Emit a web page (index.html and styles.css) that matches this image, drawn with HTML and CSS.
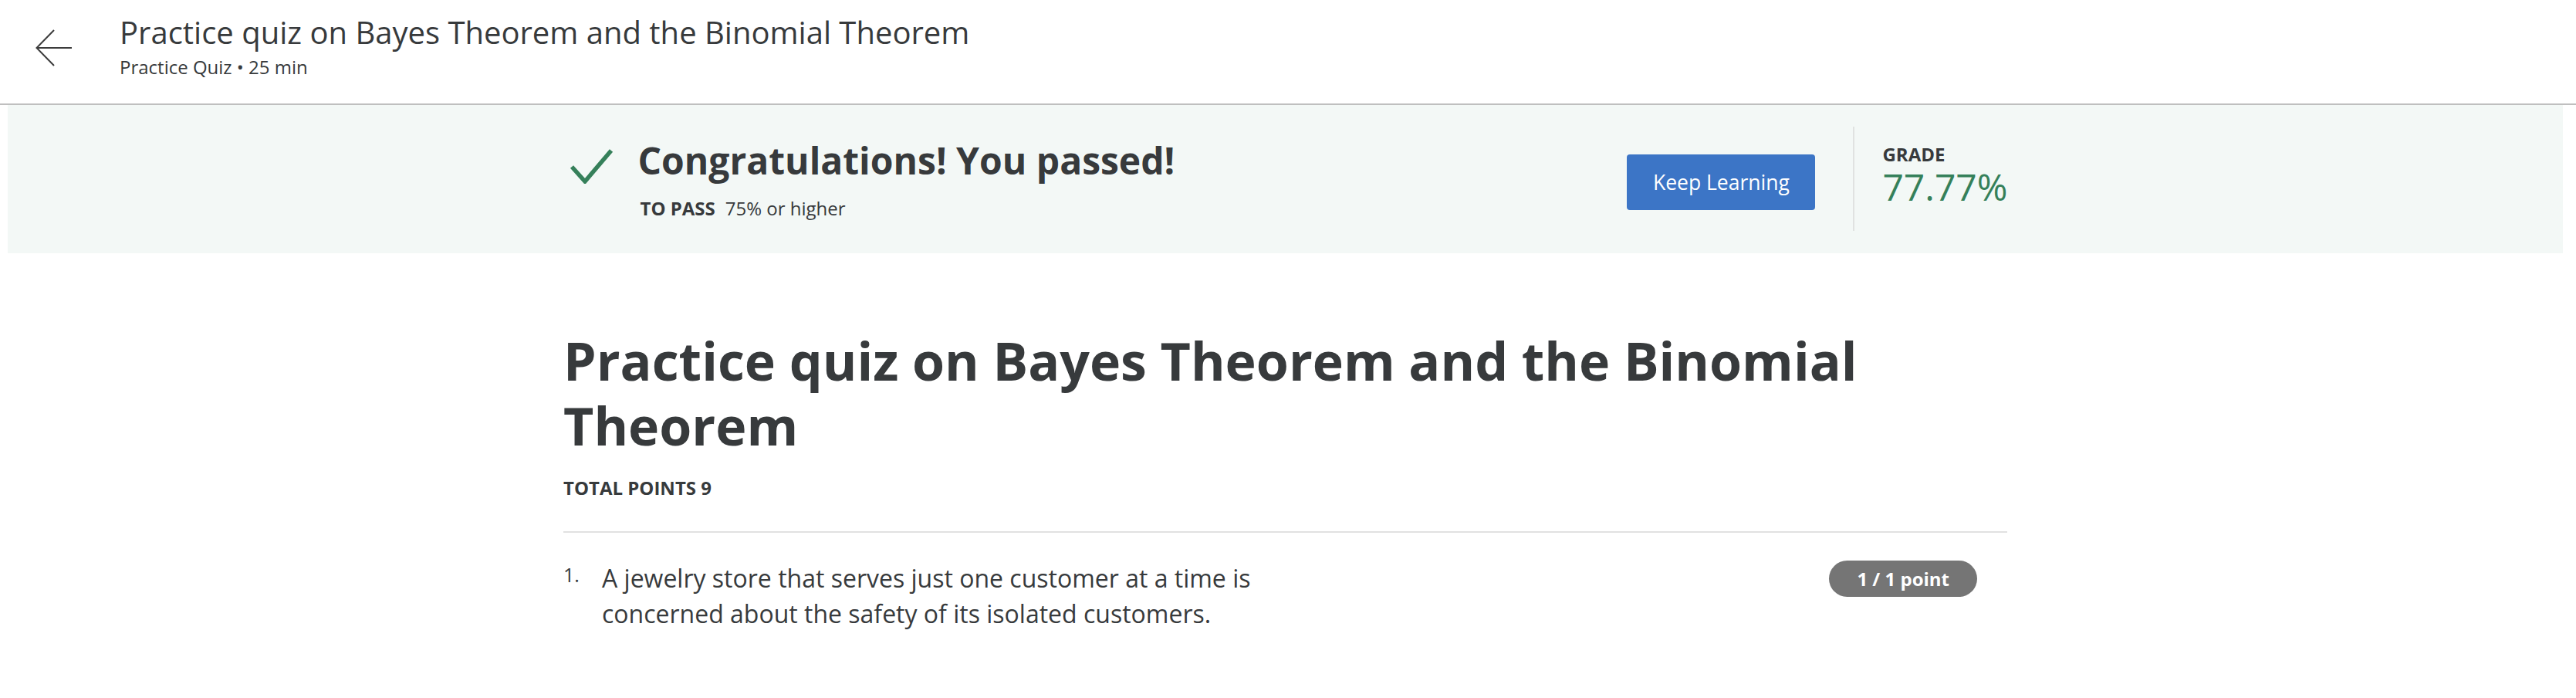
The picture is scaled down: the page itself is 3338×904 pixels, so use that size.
FILE: index.html
```html
<!DOCTYPE html>
<html lang="en">
<head>
<meta charset="utf-8">
<title>Practice quiz on Bayes Theorem and the Binomial Theorem</title>
<link rel="stylesheet" href="styles.css">
</head>
<body>
<header class="topbar">
  <a class="back" href="#" aria-label="Back">
    <svg width="48" height="48" viewBox="0 0 48 48"><path d="M47 24H1.5M24 1L1.5 24L24 47" fill="none" stroke="#3c3c3c" stroke-width="2"/></svg>
  </a>
  <div class="topbar-text">
    <div class="topbar-title">Practice quiz on Bayes Theorem and the Binomial Theorem</div>
    <div class="topbar-sub">Practice Quiz • 25 min</div>
  </div>
</header>

<section class="banner">
  <div class="wrap banner-row">
    <div class="pass">
      <svg class="check" width="64" height="60" viewBox="0 0 64 60"><polyline points="10,38 27,57 61,17" fill="none" stroke="#35805a" stroke-width="5.5"/></svg>
      <div class="pass-text">
        <h2 class="pass-title">Congratulations! You passed!</h2>
        <div class="pass-req"><span class="label">TO PASS</span>75% or higher</div>
      </div>
    </div>
    <div class="result">
      <button class="btn">Keep Learning</button>
      <div class="vdiv"></div>
      <div class="grade">
        <div class="grade-label">GRADE</div>
        <div class="grade-value">77.77%</div>
      </div>
    </div>
  </div>
</section>

<main class="wrap content">
  <h1 class="quiz-title">Practice quiz on Bayes Theorem and the Binomial Theorem</h1>
  <div class="total">TOTAL POINTS 9</div>
  <div class="question">
    <div class="q-main">
      <span class="q-num">1.</span>
      <p class="q-text">A jewelry store that serves just one customer at a time is concerned about the safety of its isolated customers.</p>
    </div>
    <span class="badge">1 / 1 point</span>
  </div>
</main>
</body>
</html>
```

FILE: styles.css
```css
* { box-sizing: border-box; }
html, body { margin: 0; padding: 0; background: #fff; }
body {
  font-family: "Open Sans", "Liberation Sans", sans-serif;
  color: #373a3c;
}

.topbar {
  display: flex;
  align-items: flex-start;
  height: 136px;
  padding: 18px 0 0 46px;
  border-bottom: 2px solid #bfbfbf;
}
.back { display: block; margin-top: 20px; width: 48px; height: 48px; }
.back svg { display: block; }
.topbar-text { margin-left: 61px; }
.topbar-title { font-size: 40px; line-height: 48px; color: #373a3c; }
.topbar-sub { font-size: 24px; line-height: 32px; margin-top: 5px; color: #373a3c; }

.wrap { width: 1871px; margin-left: calc(50% - 939px); }

.banner {
  background: #f3f8f6;
  margin: 0 17px 0 10px;
  padding: 28px 0 29px;
}
.banner-row { display: flex; justify-content: space-between; align-items: flex-start; margin-left: calc(50% - 935px); }
.pass { display: flex; align-items: flex-start; margin-top: 14px; }
.check { display: block; margin-right: 32px; flex: none; }
.pass-title { margin: 0; font-size: 48px; line-height: 60px; font-weight: 700; color: #373a3c; }
.pass-req { margin-top: 16px; margin-left: 3px; font-size: 24px; line-height: 32px; }
.pass-req .label { font-weight: 700; margin-right: 13px; }

.result { display: flex; align-items: flex-start; }
.btn {
  margin-top: 36px;
  width: 244px;
  height: 72px;
  border: 0;
  border-radius: 4px;
  background: #3c75c6;
  color: #fff;
  font-family: "Open Sans", "Liberation Sans", sans-serif;
  font-size: 26.5px;
  font-weight: 400;
  padding: 0;
}
.vdiv { width: 2px; height: 135px; background: #e0e2e1; margin-left: 49px; margin-right: 36px; }
.grade { margin-top: 21px; }
.grade-label { font-size: 24px; line-height: 30px; font-weight: 700; color: #373a3c; }
.grade-value { font-size: 48px; line-height: 54px; color: #35805a; }

.content { padding-top: 97px; }
.quiz-title { margin: 0; font-size: 68px; line-height: 84px; font-weight: 700; color: #373a3c; }
.total { margin-top: 24px; font-size: 24px; line-height: 30px; font-weight: 700; padding-bottom: 41px; border-bottom: 2px solid #e1e1e1; }

.question { display: flex; justify-content: space-between; align-items: flex-start; padding-top: 36px; }
.q-main { display: flex; align-items: flex-start; }
.q-num { width: 50px; flex: none; font-size: 25px; line-height: 34px; padding-top: 1px; }
.q-text { margin: 0; max-width: 900px; font-size: 32px; line-height: 46px; }
.badge {
  margin-right: 39px;
  height: 47px;
  line-height: 47px;
  padding: 0 36px;
  border-radius: 24px;
  background: #757575;
  color: #fff;
  font-size: 24px;
  font-weight: 700;
  white-space: nowrap;
}
```
